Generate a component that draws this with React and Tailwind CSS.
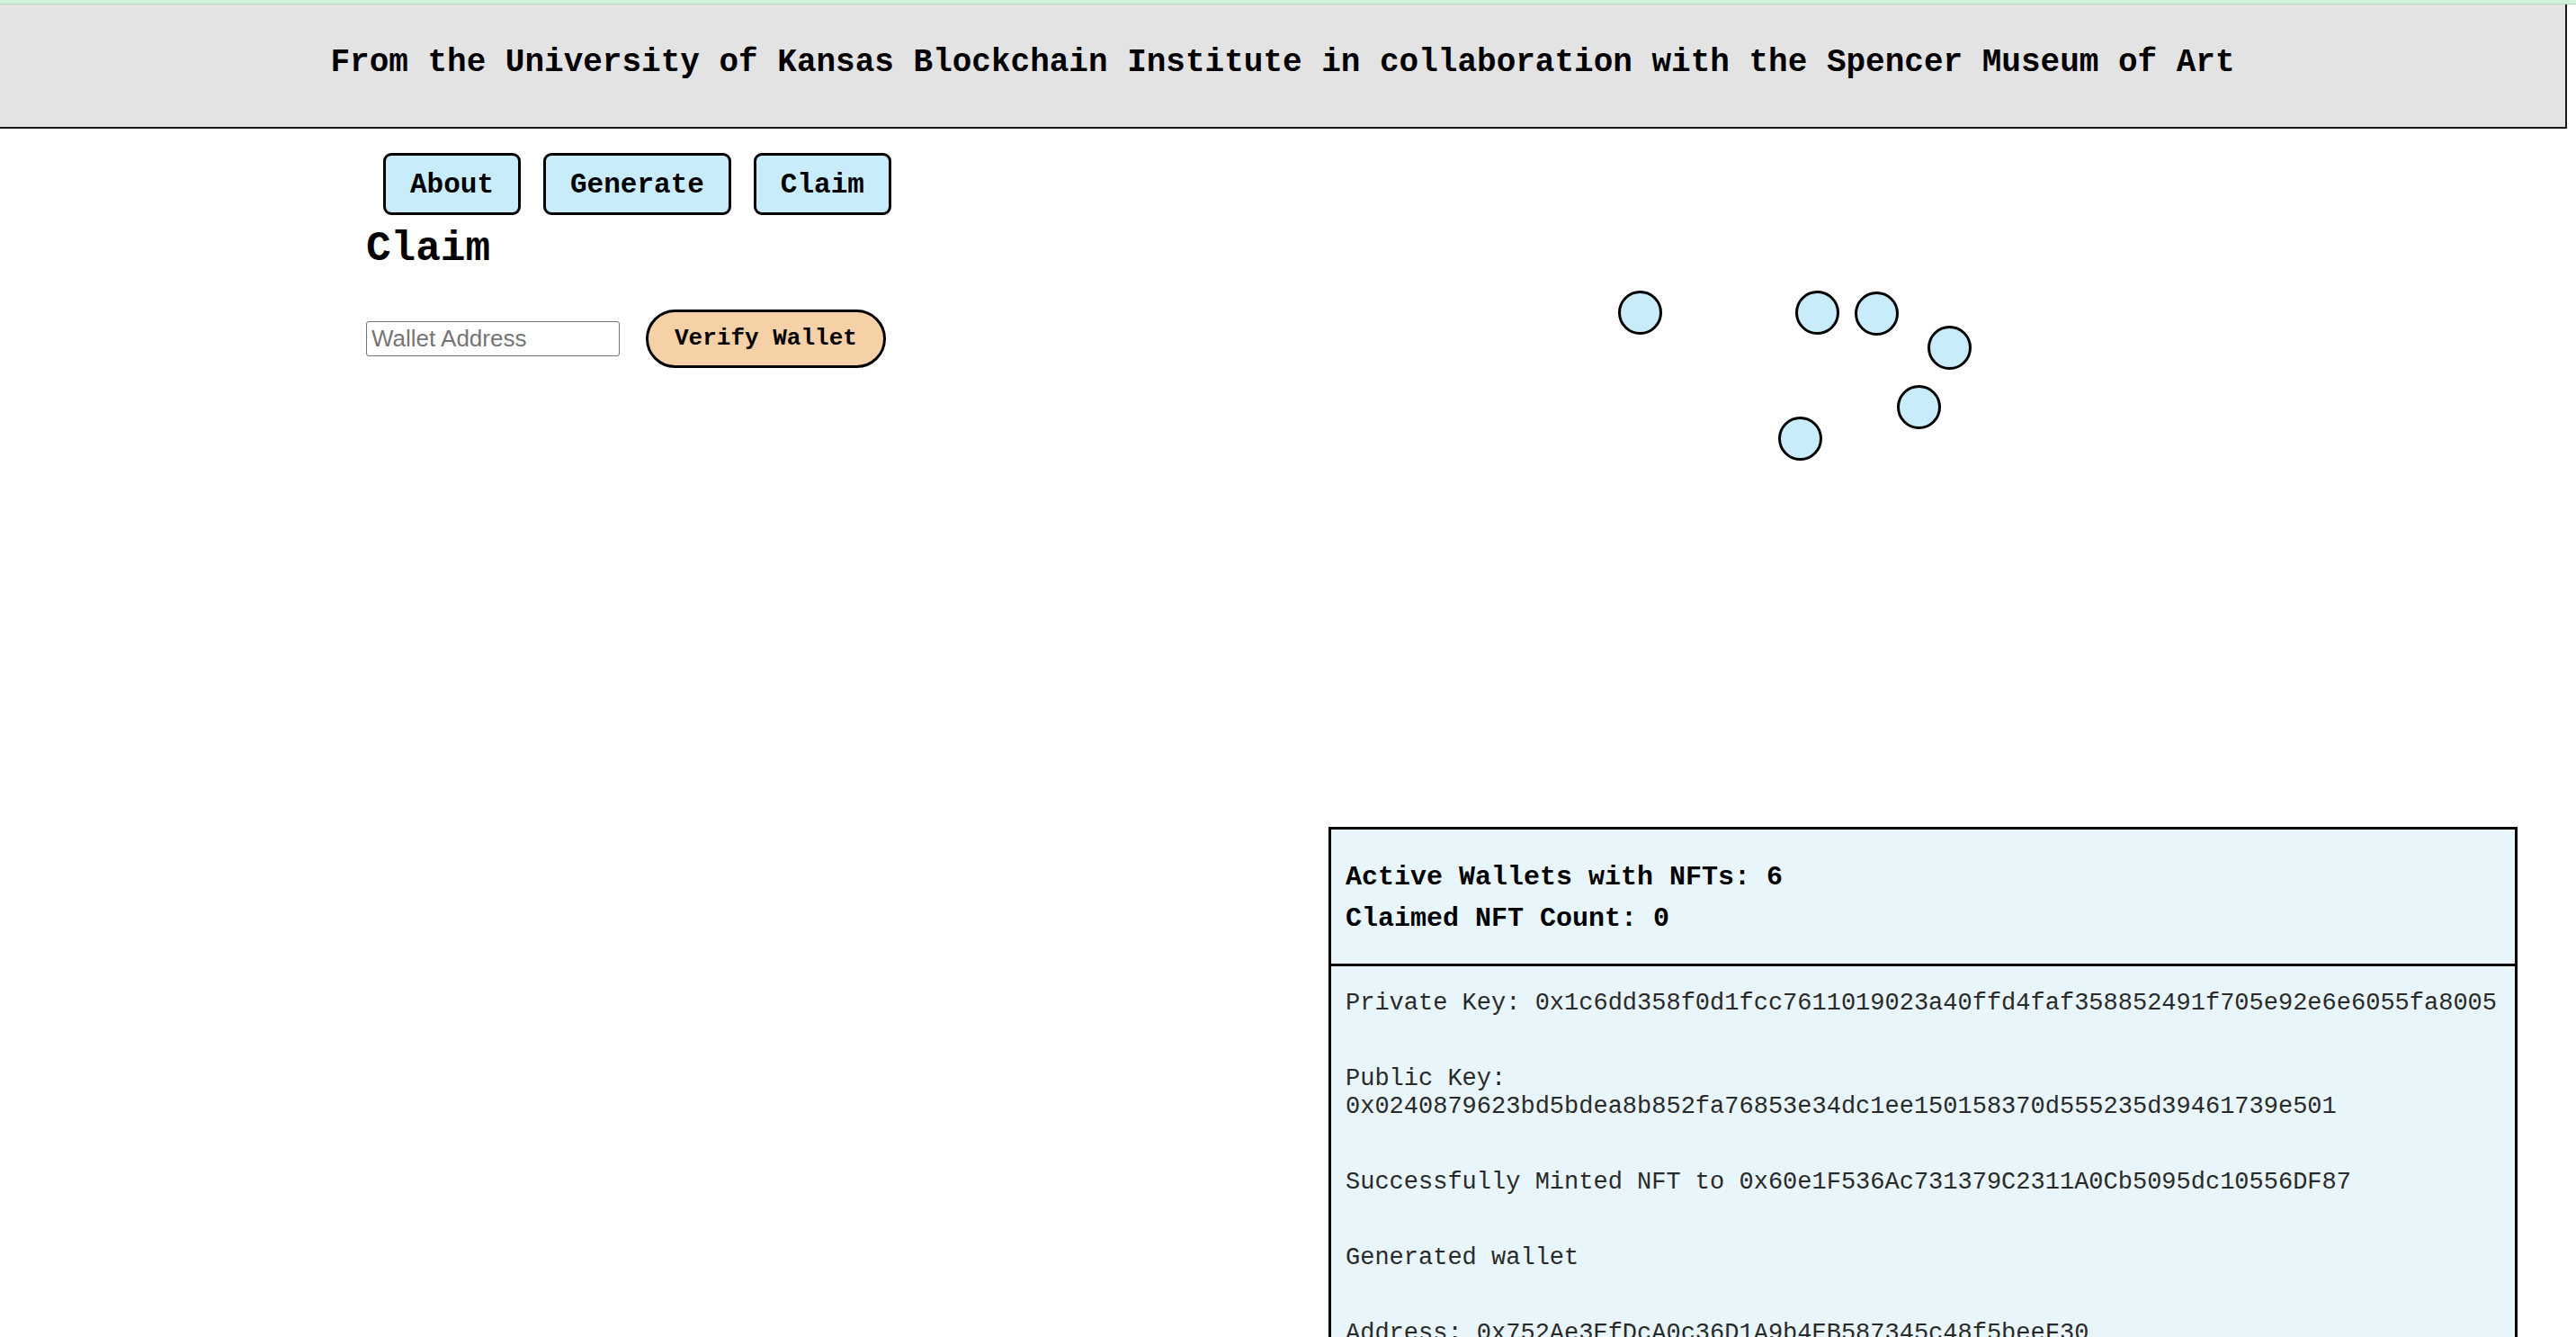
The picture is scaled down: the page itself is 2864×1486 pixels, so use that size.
import React from 'react';

const mono = "font-['Liberation_Mono','Courier_New',monospace]";

const circles = [
    { x: 322, y: 180 },
    { x: 519, y: 180 },
    { x: 585, y: 181 },
    { x: 666, y: 219 },
    { x: 632, y: 285 },
    { x: 500, y: 320 },
];

const logLines = [
    'Private Key: 0x1c6dd358f0d1fcc7611019023a40ffd4faf358852491f705e92e6e6055fa8005',
    ['Public Key:', '0x0240879623bd5bdea8b852fa76853e34dc1ee150158370d555235d39461739e501'],
    'Successfully Minted NFT to 0x60e1F536Ac731379C2311A0Cb5095dc10556DF87',
    'Generated wallet',
    'Address: 0x752Ae3EfDcA0c36D1A9b4EB587345c48f5beeF30',
];

const NavButton = ({ label }) => (
    <button className={`h-[69px] px-[27px] pt-[3px] border-[3px] border-black rounded-[9px] bg-[#c9ecfb] text-[31px] font-bold text-black ${mono}`}>
        {label}
    </button>
);

const App = () => {
    return (
        <div className="w-[2864px] min-h-screen bg-white text-black">
            {/* top strip */}
            <div className="h-[5px] bg-[#d2f1d9] border-b border-[#b9d3be]" />

            {/* Header */}
            <header className="w-[2854px] h-[138px] flex items-center justify-center pb-[7px] bg-[#e3e3e3] border-r-2 border-b-2 border-[#1a1a1a]">
                <h1 className={`text-[36px] leading-[42px] font-bold whitespace-nowrap ${mono}`}>
                    From the University of Kansas Blockchain Institute in collaboration with the Spencer Museum of Art
                </h1>
            </header>

            <div className="flex">
                {/* Left column */}
                <div className="w-[1477px] pl-[407px] flex flex-col">
                    <nav className="ml-[19px] mt-[27px] flex gap-[25px]">
                        <NavButton label="About" />
                        <NavButton label="Generate" />
                        <NavButton label="Claim" />
                    </nav>

                    <h2 className={`mt-[12px] text-[46px] leading-[52px] font-bold ${mono}`}>Claim</h2>

                    <div className="mt-[41px] flex items-center gap-[29px]">
                        <input
                            type="text"
                            placeholder="Wallet Address"
                            className="w-[282px] h-[39px] px-[5px] border border-[#767676] rounded-[3px] bg-white text-[26px] font-['Liberation_Sans',Arial,sans-serif] placeholder:text-[#757575] outline-none"
                        />
                        <button className={`h-[65px] px-[29px] border-[3px] border-black rounded-full bg-[#f6d1a8] text-[26px] font-bold ${mono}`}>
                            Verify Wallet
                        </button>
                    </div>
                </div>

                {/* Right column */}
                <div className="w-[1322px] flex flex-col">
                    {/* Wallet canvas */}
                    <div className="relative h-[776px]">
                        {circles.map((c, i) => (
                            <div
                                key={i}
                                className="absolute w-[49px] h-[49px] rounded-full border-[3px] border-black bg-[#c9ecfb]"
                                style={{ left: c.x, top: c.y }}
                            />
                        ))}
                    </div>

                    {/* Stats panel */}
                    <div className={`border-[3px] border-black bg-[#e8f5fb] ${mono}`}>
                        <div className="px-[16px] pt-[30px] pb-[27px] text-[30px] leading-[46px] font-bold">
                            <p>Active Wallets with NFTs: 6</p>
                            <p>Claimed NFT Count: 0</p>
                        </div>
                        <div className="border-t-[3px] border-black px-[16px] pt-[26px] pb-[40px] flex flex-col gap-[53px] text-[27px] leading-[31px] text-[#2a2a2a]">
                            {logLines.map((line, i) => (
                                <p key={i} className="whitespace-nowrap">
                                    {Array.isArray(line) ? (
                                        <>
                                            {line[0]}
                                            <br />
                                            {line[1]}
                                        </>
                                    ) : line}
                                </p>
                            ))}
                        </div>
                    </div>
                </div>
            </div>
        </div>
    );
};

export default App;
